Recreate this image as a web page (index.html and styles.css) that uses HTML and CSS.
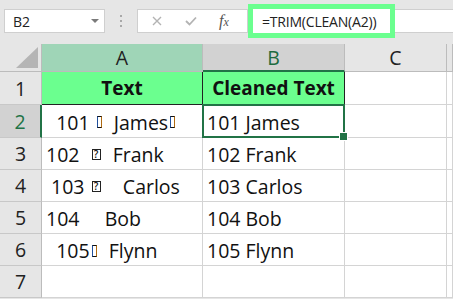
FILE: index.html
```html
<!DOCTYPE html>
<html lang="en">
<head>
  <meta charset="UTF-8" />
  <title>TRIM CLEAN</title>
  <link rel="stylesheet" href="styles.css">
</head>
<body>

  <!-- BARRA DE FORMULAS -->
  <div class="toolbar">
    <div class="name-box">
      <span>B2</span>
      <span class="caret"></span>
    </div>
    <div class="grip"><i></i><i></i><i></i></div>
    <div class="fx-buttons">
      <svg class="ico" width="10" height="10" viewBox="0 0 10 10"><path d="M1 1L9 9M9 1L1 9" stroke="#b3b3b3" stroke-width="1.4" fill="none"/></svg>
      <svg class="ico" width="12" height="10" viewBox="0 0 12 10"><path d="M1 5L4.5 8.5L11 1.5" stroke="#b3b3b3" stroke-width="1.8" fill="none"/></svg>
      <span class="fx">f<small>x</small></span>
    </div>
    <div class="formula">=TRIM(CLEAN(A2))</div>
    <div class="formula-rest"></div>
  </div>

  <!-- HOJA -->
  <div class="sheet">
    <div class="hd corner"><span class="tri"></span></div>
    <div class="hd col col-a">A</div>
    <div class="hd col col-b">B</div>
    <div class="hd col">C</div>
    <div class="hd col"></div>

    <div class="hd row">1</div>
    <div class="cell title t-a">Text</div>
    <div class="cell title t-b">Cleaned Text</div>
    <div class="cell"></div>
    <div class="cell"></div>

    <div class="hd row row-sel">2</div>
    <div class="cell raw">  101 <span class="tofu"></span>  James<span class="tofu"></span></div>
    <div class="cell active">101 James</div>
    <div class="cell"></div>
    <div class="cell"></div>

    <div class="hd row">3</div>
    <div class="cell raw">102  <span class="qbox">?</span>  Frank</div>
    <div class="cell">102 Frank</div>
    <div class="cell"></div>
    <div class="cell"></div>

    <div class="hd row">4</div>
    <div class="cell raw"> 103 <span class="qbox">?</span>    Carlos</div>
    <div class="cell">103 Carlos</div>
    <div class="cell"></div>
    <div class="cell"></div>

    <div class="hd row">5</div>
    <div class="cell raw">104     Bob</div>
    <div class="cell">104 Bob</div>
    <div class="cell"></div>
    <div class="cell"></div>

    <div class="hd row">6</div>
    <div class="cell raw">  105<span class="tofu"></span>  Flynn</div>
    <div class="cell">105 Flynn</div>
    <div class="cell"></div>
    <div class="cell"></div>

    <div class="hd row">7</div>
    <div class="cell"></div>
    <div class="cell"></div>
    <div class="cell"></div>
    <div class="cell"></div>
  </div>

</body>
</html>
```

FILE: styles.css
```css
* {
  box-sizing: border-box;
  margin: 0;
  padding: 0;
}
body {
  background: #e6e6e6;
  font-family: "Open Sans", "Liberation Sans", sans-serif;
  color: #111;
  overflow: hidden;
}

/* === BARRA DE FORMULAS === */
.toolbar {
  display: flex;
  align-items: center;
  height: 42px;
  padding-left: 4px;
  margin-bottom: 2px;
}
.name-box {
  display: flex;
  align-items: center;
  justify-content: space-between;
  width: 101px;
  height: 24px;
  padding: 0 5px 0 8px;
  background: #fff;
  border: 1px solid #cfcfcf;
  font-size: 14px;
  color: #222;
}
.caret {
  width: 0;
  height: 0;
  border-left: 4px solid transparent;
  border-right: 4px solid transparent;
  border-top: 4px solid #7a7a7a;
}
.grip {
  display: flex;
  flex-direction: column;
  align-items: center;
  gap: 3px;
  width: 32px;
}
.grip i {
  width: 2px;
  height: 2px;
  background: #a8a8a8;
}
.fx-buttons {
  display: flex;
  align-items: center;
  width: 111px;
  height: 24px;
  padding-left: 14px;
  background: #fff;
  border: 1px solid #cfcfcf;
}
.ico {
  margin-right: 23px;
}
.fx {
  font-family: "Liberation Serif", serif;
  font-style: italic;
  font-size: 16px;
  color: #555;
  margin-left: -1px;
}
.fx small {
  font-size: 12px;
}
.formula {
  display: flex;
  align-items: center;
  width: 147px;
  height: 34px;
  padding-left: 9px;
  background: #fff;
  border: 5px solid #6bff8f;
  font-size: 14px;
  letter-spacing: -0.2px;
  color: #222;
}
.formula-rest {
  flex: 1;
  height: 24px;
  background: #fff;
  border-top: 1px solid #cfcfcf;
  border-bottom: 1px solid #cfcfcf;
}

/* === HOJA === */
.sheet {
  display: grid;
  grid-template-columns: 42px 161px 142px 102px 1fr;
  grid-template-rows: 28px 33px 33px 32px 32px 32px 32px 32px;
  font-size: 19.5px;
}
.hd {
  display: flex;
  align-items: center;
  justify-content: center;
  background: #e6e6e6;
  border-right: 1px solid #bcbcbc;
  border-bottom: 1px solid #c8c8c8;
  color: #222;
}
.corner {
  position: relative;
  border-bottom-color: #bcbcbc;
}
.tri {
  position: absolute;
  right: 3px;
  bottom: 3px;
  width: 0;
  height: 0;
  border-left: 22px solid transparent;
  border-bottom: 21px solid #b5b5b5;
}
.col {
  border-bottom-color: #bcbcbc;
}
.col-a {
  background: #9fd5b7;
}
.col-b {
  background: #d2d2d2;
  color: #1d6b3f;
  border-bottom: 2px solid #217346;
}
.row {
  border-right-color: #bcbcbc;
}
.row-sel {
  background: #d2d2d2;
  color: #217346;
  border-right: 2px solid #217346;
}

.cell {
  display: flex;
  align-items: center;
  padding: 2px 0 0 4px;
  background: #fff;
  border-right: 1px solid #d4d4d4;
  border-bottom: 1px solid #d4d4d4;
  white-space: pre;
  color: #111;
}
.title {
  justify-content: center;
  padding: 0;
  background: #6bff8f;
  font-size: 19px;
  font-weight: 700;
  border-right-color: #222;
  border-bottom-color: #222;
}
.t-b {
  border-left: 1px solid #222;
  margin-left: -1px;
}

/* caracteres no imprimibles */
.tofu {
  display: inline-block;
  width: 5px;
  height: 12px;
  margin: 0 2px;
  border: 1px solid #111;
  border-left-color: #1f4f9c;
  border-right-color: #b06a10;
  vertical-align: -1px;
}
.qbox {
  display: inline-block;
  width: 9px;
  height: 11px;
  margin: 0 2px;
  border: 1px solid #222;
  font-size: 10px;
  font-weight: 600;
  line-height: 9px;
  text-align: center;
  vertical-align: 0;
}

/* celda activa */
.active {
  position: relative;
}
.active::after {
  content: "";
  position: absolute;
  left: -1px;
  top: -1px;
  right: -1px;
  bottom: -1px;
  border: 2px solid #217346;
}
.active::before {
  content: "";
  position: absolute;
  right: -4px;
  bottom: -4px;
  width: 7px;
  height: 7px;
  background: #217346;
  border: 1px solid #fff;
  z-index: 1;
}
```
